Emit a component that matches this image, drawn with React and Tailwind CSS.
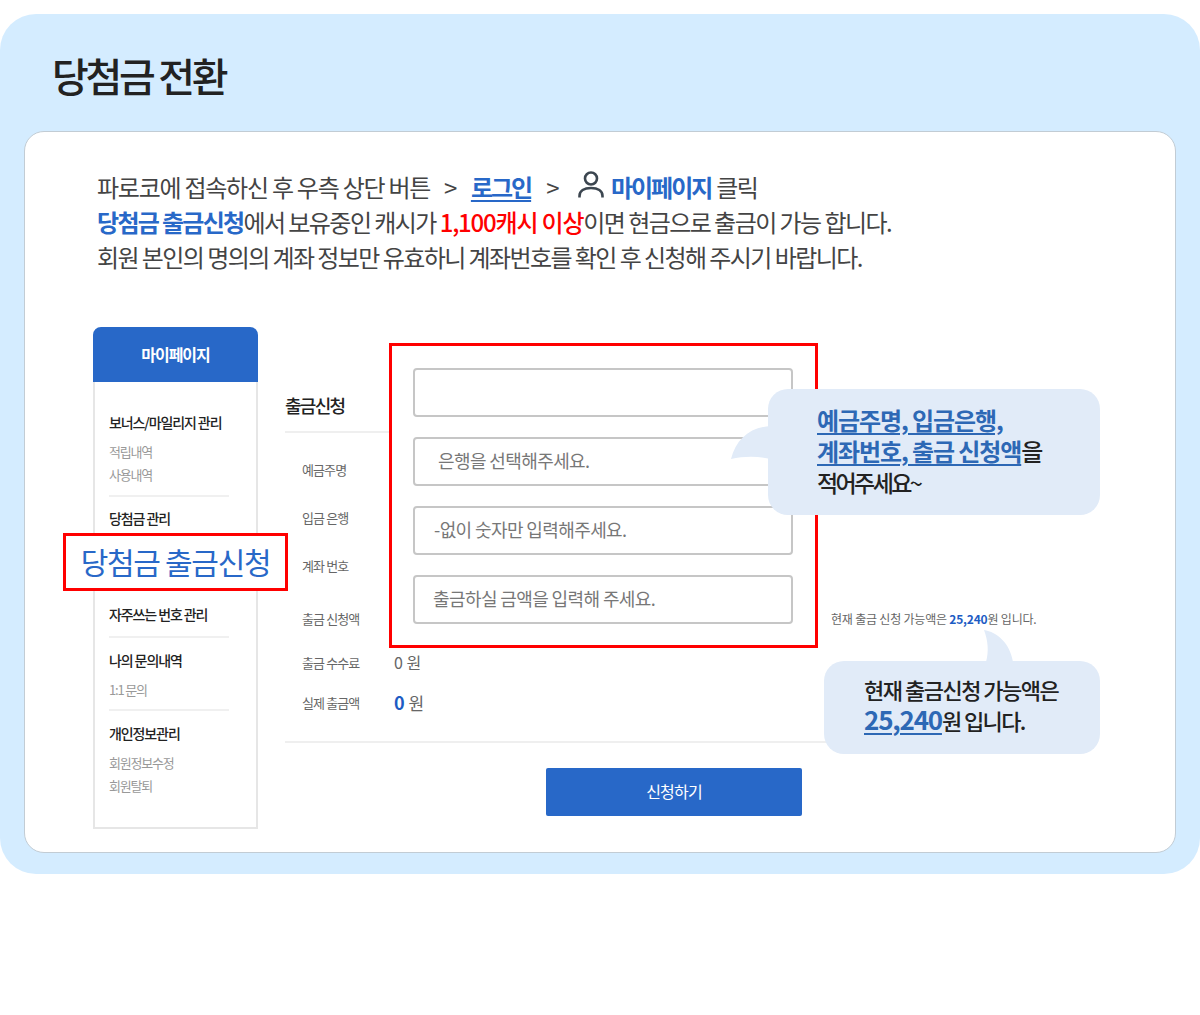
const font = { fontFamily: '"Noto Sans CJK KR", "Noto Sans", sans-serif' };

const menu = [
  { title: "보너스/마일리지 관리", items: ["적립내역", "사용내역"], cls: "pt-[30px] pb-[9px]" },
  { title: "당첨금 관리", items: ["당첨금 출금신청"], cls: "pt-[11px] pb-[29px]" },
  { title: "자주쓰는 번호 관리", items: [], cls: "pt-[14px] pb-[12px]" },
  { title: "나의 문의내역", items: ["1:1 문의"], cls: "pt-[12px] pb-[8px]" },
  { title: "개인정보관리", items: ["회원정보수정", "회원탈퇴"], cls: "pt-[12px]" },
];

function Sidebar() {
  return (
    <div className="w-[165px] shrink-0">
      <div className="h-[55px] pb-[2px] rounded-t-lg bg-[#2868c8] flex items-center justify-center text-white text-[16px] font-bold tracking-[-1px]">
        마이페이지
      </div>
      <div className="h-[447px] border-2 border-t-0 border-[#e6e6e6] px-[14px]">
        {menu.map((group, i) => (
          <div key={group.title} className={`${group.cls} ${i < 4 ? "border-b-2 border-[#f0f0f0]" : ""} w-[120px]`}>
            <div className="h-[20px] leading-[20px] text-[14px] font-medium text-[#222] tracking-[-1.1px] whitespace-nowrap">{group.title}</div>
            {group.items.length > 0 && (
              <div className="mt-[8px]">
                {group.items.map((item) => (
                  <div key={item} className="h-[23px] leading-[23px] text-[13px] text-[#999] tracking-[-1.2px] whitespace-nowrap">{item}</div>
                ))}
              </div>
            )}
          </div>
        ))}
      </div>
    </div>
  );
}

function Row({ label, className, children }) {
  return (
    <div className={`flex items-center ${className}`}>
      <div className="w-[109px] pl-[17px] text-[13px] text-[#666] tracking-[-0.9px] whitespace-nowrap">{label}</div>
      {children}
    </div>
  );
}

function Form() {
  return (
    <div className="w-[778px] ml-[27px] pt-[64px]">
      <div className="h-[42px] border-b-2 border-[#efefef] text-[18px] leading-[28px] text-[#222] font-medium tracking-[-1.7px]">출금신청</div>
      <div className="pt-[13px]">
        <Row label="예금주명" className="h-[48px]" />
        <Row label="입금 은행" className="h-[48px]" />
        <Row label="계좌 번호" className="h-[48px]" />
        <Row label="출금 신청액" className="h-[48px] mt-[5px]">
          <div className="ml-[437px] text-[12px] text-[#666] tracking-[-0.2px] whitespace-nowrap">
            현재 출금 신청 가능액은 <b className="text-[#1d5cc4] font-bold">25,240</b>원 입니다.
          </div>
        </Row>
        <Row label="출금 수수료" className="h-[40px]">
          <div className="pb-[2px] text-[16px] text-[#666]">0 원</div>
        </Row>
        <Row label="실제 출금액" className="h-[40px]">
          <div className="pb-[2px] text-[17px] text-[#666]"><b className="text-[#1d5cc4] font-bold text-[18px]">0</b> 원</div>
        </Row>
      </div>
      <div className="mt-[18px] border-t-2 border-[#efefef] pt-[25px] flex justify-center">
        <div className="w-[256px] h-[48px] pb-[2px] rounded-[2px] bg-[#2868c8] text-white text-[16px] tracking-[-0.8px] flex items-center justify-center">신청하기</div>
      </div>
    </div>
  );
}

function Field({ text, className }) {
  return (
    <div className={`h-[49px] pb-[2px] border-2 border-[#c6c6c6] rounded-[4px] flex items-center text-[18px] text-[#777] tracking-[-0.6px] ${className}`}>
      {text}
    </div>
  );
}

function Mock() {
  return (
    <div className="relative ml-[68px] mt-[53px] flex">
      <Sidebar />
      <Form />

      <div className="absolute left-[-30px] top-[206px] w-[225px] h-[58px] pb-[2px] border-[3px] border-[#ff0000] bg-white flex items-center justify-center text-[30px] text-[#2868c8] tracking-[-1.3px] whitespace-nowrap">
        당첨금 출금신청
      </div>

      <div className="absolute left-[296px] top-[16px] w-[429px] h-[305px] border-[3px] border-[#ff0000] bg-white pt-[22px] pl-[21px] flex flex-col gap-[20px]">
        <Field className="w-[380px]" />
        <Field className="w-[380px] pl-[23px]" text="은행을 선택해주세요." />
        <Field className="w-[380px] pl-[19px]" text="-없이 숫자만 입력해주세요." />
        <Field className="w-[380px] pl-[18px]" text="출금하실 금액을 입력해 주세요." />
      </div>

      <svg className="absolute left-[637px] top-[98px]" width="42" height="36" viewBox="0 0 42 36">
        <path d="M1 34 C6 14 20 2 41 1 L41 34 C28 31 14 31 1 34 Z" fill="#e1ebf8" />
      </svg>
      <div className="absolute left-[675px] top-[62px] w-[332px] h-[126px] rounded-[20px] bg-[#e1ebf8] pl-[49px] pt-[15px] text-[24px] leading-[31px] text-[#222] font-medium tracking-[-1.1px] whitespace-nowrap">
        <div><u className="text-[#2d68b5] font-bold underline-offset-[3px] decoration-2">예금주명, 입금은행,</u></div>
        <div><u className="text-[#2d68b5] font-bold underline-offset-[3px] decoration-2">계좌번호, 출금 신청액</u>을</div>
        <div className="pt-[1px] tracking-[-2.6px] text-[23px]">적어주세요~</div>
      </div>

      <svg className="absolute left-[890px] top-[302px]" width="31" height="34" viewBox="0 0 31 34">
        <path d="M1 1 C14 3 27 14 30 33 L3 33 C6 22 5 12 1 1 Z" fill="#e1ebf8" />
      </svg>
      <div className="absolute left-[731px] top-[334px] w-[276px] h-[93px] rounded-[20px] bg-[#e1ebf8] pl-[40px] pt-[13px] text-[22px] leading-[30px] text-[#222] font-medium tracking-[-1.5px] whitespace-nowrap">
        <div>현재 출금신청 가능액은</div>
        <div><u className="text-[26px] text-[#2d68b5] font-bold tracking-[-1.2px] underline-offset-[3px] decoration-2">25,240</u><span className="text-[22px] tracking-[-1.6px]">원 입니다.</span></div>
      </div>
    </div>
  );
}

export default function App() {
  return (
    <div style={font} className="min-h-[1015px] bg-white pt-[14px]">
      <div className="h-[860px] rounded-[36px] bg-[#d4ecff] px-[24px]">
        <h1 className="pl-[28px] h-[117px] pt-[31px] text-[40px] leading-[60px] font-medium text-[#222] tracking-[-3.3px]">당첨금 전환</h1>
        <div className="h-[722px] rounded-[20px] border border-[#c2ccd4] bg-white">
          <div className="pl-[72px] pt-[37px] text-[24px] leading-[35px] text-[#444] tracking-[-1.55px] whitespace-nowrap">
            <div className="flex items-center">
              <span className="tracking-[-1.25px]">파로코에 접속하신 후 우측 상단 버튼</span>
              <span className="ml-[14px]">&gt;</span>
              <u className="ml-[15px] text-[#2868c8] font-bold tracking-[-2px] underline-offset-[3px] decoration-2">로그인</u>
              <span className="ml-[15px]">&gt;</span>
              <svg className="ml-[20px] mb-[4px]" width="26" height="27" viewBox="0 0 26 27" fill="none" stroke="#3c4650" strokeWidth="2.6">
                <circle cx="13" cy="7.5" r="6" />
                <path d="M1.5 26.5 V25 C1.5 20 6 17 13 17 C20 17 24.5 20 24.5 25 V26.5" />
              </svg>
              <b className="ml-[7px] text-[#2868c8] font-bold tracking-[-2px]">마이페이지</b>
              <span className="ml-[5px]">클릭</span>
            </div>
            <div>
              <b className="text-[#2868c8] font-bold tracking-[-1.7px]">당첨금 출금신청</b>에서 보유중인 캐시가 <b className="text-[#ff0000] font-medium tracking-[-1.2px]">1,100캐시 이상</b>이면 현금으로 출금이 가능 합니다.
            </div>
            <div className="tracking-[-1.57px]">회원 본인의 명의의 계좌 정보만 유효하니 계좌번호를 확인 후 신청해 주시기 바랍니다.</div>
          </div>
          <Mock />
        </div>
      </div>
    </div>
  );
}
